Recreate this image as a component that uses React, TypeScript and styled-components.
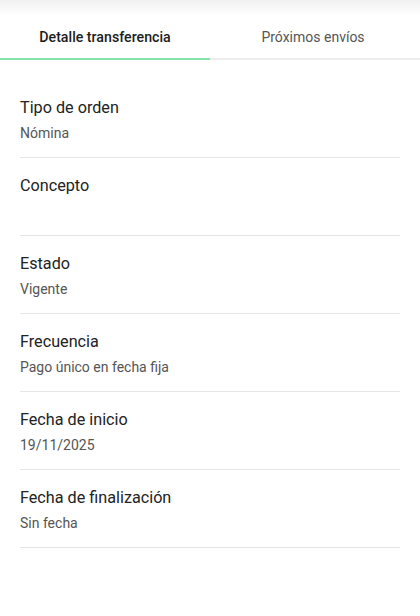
import React from 'react';
import styled, { createGlobalStyle } from 'styled-components';

const GlobalStyle = createGlobalStyle`
  body {
    margin: 0;
    background: #ffffff;
    font-family: Roboto, 'Liberation Sans', sans-serif;
    -webkit-font-smoothing: antialiased;
  }
`;

const Screen = styled.div`
  width: 420px;
  min-height: 616px;
  background: #ffffff;
`;

const TopShade = styled.div`
  height: 16px;
  background: linear-gradient(#f1f1f1, #ffffff);
`;

const Tabs = styled.div`
  display: grid;
  grid-template-columns: 1fr 1fr;
  border-bottom: 2px solid #ececec;
`;

const Tab = styled.div<{ active?: boolean }>`
  box-sizing: border-box;
  height: 42px;
  display: flex;
  align-items: center;
  justify-content: center;
  font-size: ${({ active }) => (active ? '14.2px' : '14px')};
  font-weight: ${({ active }) => (active ? 500 : 400)};
  color: ${({ active }) => (active ? '#1c1c1c' : '#555555')};
  padding-right: ${({ active }) => (active ? '0' : '4px')};
  position: relative;

  &::after {
    content: '';
    position: absolute;
    left: 0;
    right: 0;
    bottom: -2px;
    height: 2px;
    background: ${({ active }) => (active ? '#86e3a9' : 'transparent')};
  }
`;

const List = styled.div`
  padding: 20px 20px 0;
`;

const Row = styled.div`
  display: flex;
  flex-direction: column;
  height: 61px;
  padding-top: 16px;
  border-bottom: 1px solid #e6e6e6;
`;

const Label = styled.div`
  font-size: 16.2px;
  line-height: 24px;
  color: #222222;
`;

const Value = styled.div`
  font-size: 14px;
  line-height: 26px;
  color: #555555;
  min-height: 26px;
`;

const items: [string, string][] = [
  ['Tipo de orden', 'Nómina'],
  ['Concepto', ''],
  ['Estado', 'Vigente'],
  ['Frecuencia', 'Pago único en fecha fija'],
  ['Fecha de inicio', '19/11/2025'],
  ['Fecha de finalización', 'Sin fecha'],
];

const App: React.FC = () => {
  return (
    <>
      <GlobalStyle />
      <Screen>
        <TopShade />
        <Tabs>
          <Tab active>Detalle transferencia</Tab>
          <Tab>Próximos envíos</Tab>
        </Tabs>
        <List>
          {items.map(([label, value]) => (
            <Row key={label}>
              <Label>{label}</Label>
              <Value>{value}</Value>
            </Row>
          ))}
        </List>
      </Screen>
    </>
  );
};

export default App;
